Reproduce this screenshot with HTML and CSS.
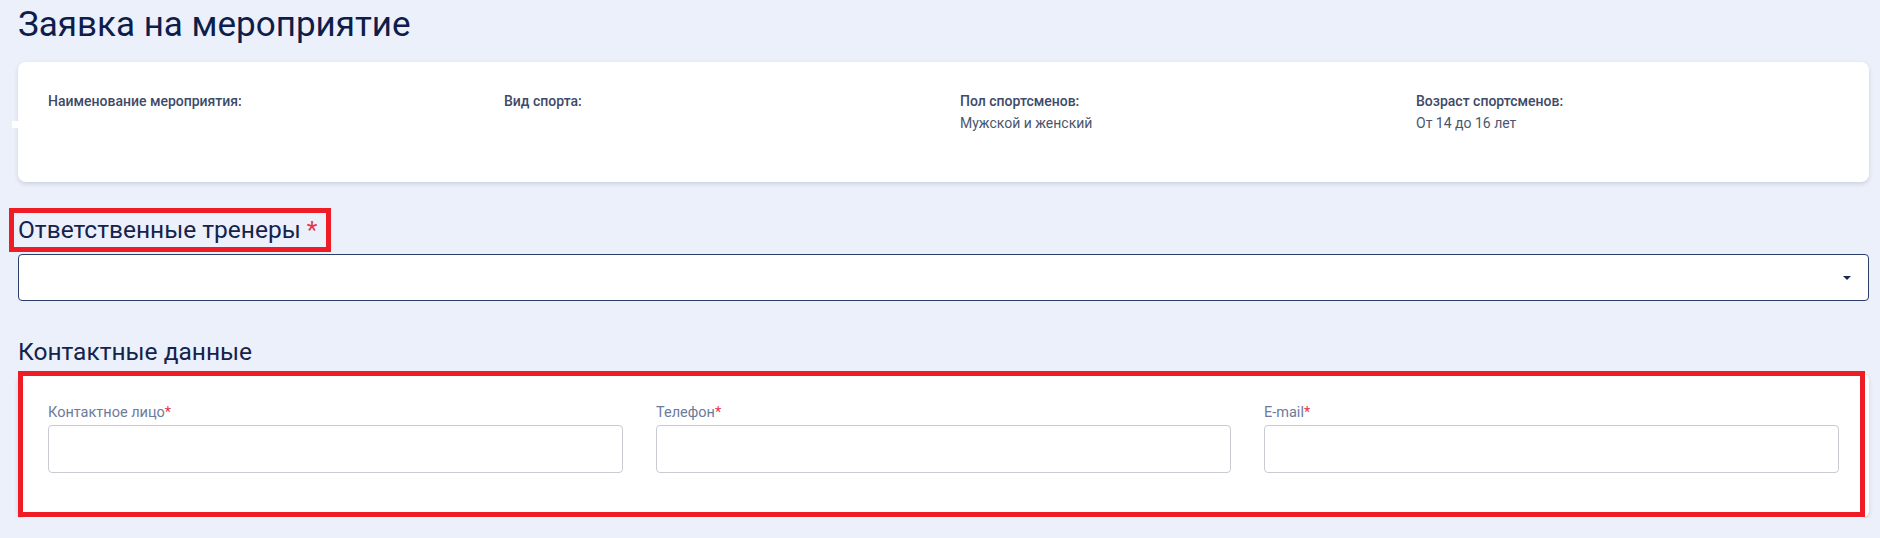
FILE: index.html
```html
<!DOCTYPE html>
<html lang="ru">
<head>
<meta charset="utf-8">
<title>Заявка на мероприятие</title>
<link rel="stylesheet" href="styles.css">
</head>
<body>
<main class="page">
  <h1 class="title">Заявка на мероприятие</h1>

  <section class="card info">
    <div class="info-item">
      <div class="info-label">Наименование мероприятия:</div>
      <div class="info-value"></div>
    </div>
    <div class="info-item">
      <div class="info-label">Вид спорта:</div>
      <div class="info-value"></div>
    </div>
    <div class="info-item">
      <div class="info-label">Пол спортсменов:</div>
      <div class="info-value">Мужской и женский</div>
    </div>
    <div class="info-item">
      <div class="info-label">Возраст спортсменов:</div>
      <div class="info-value">От 14 до 16 лет</div>
    </div>
  </section>

  <h2 class="section-title marked">Ответственные тренеры <span class="req">*</span></h2>
  <div class="select">
    <span class="select-value"></span>
    <svg class="select-arrow" width="8" height="4" viewBox="0 0 8 4"><path d="M0 0H8L4 4Z" fill="#1b2a52"/></svg>
  </div>

  <h2 class="section-title">Контактные данные</h2>
  <section class="card contacts marked-box">
    <div class="field">
      <div class="field-label">Контактное лицо<span class="req">*</span></div>
      <div class="input"></div>
    </div>
    <div class="field">
      <div class="field-label">Телефон<span class="req">*</span></div>
      <div class="input"></div>
    </div>
    <div class="field">
      <div class="field-label">E-mail<span class="req">*</span></div>
      <div class="input"></div>
    </div>
  </section>
</main>
</body>
</html>
```

FILE: styles.css
```css
* { box-sizing: border-box; }

html, body {
  margin: 0;
  padding: 0;
  background: #ecf0fa;
  font-family: Roboto, "Noto Sans", "Liberation Sans", sans-serif;
}

.page {
  padding: 5px 11px 0 18px;
}

.title {
  margin: 0 0 17px 0;
  font-size: 35px;
  line-height: 40px;
  font-weight: 400;
  color: #0e1d4a;
}

.card {
  background: #ffffff;
  border-radius: 8px;
  box-shadow: 0 2px 4px rgba(60, 70, 110, 0.18);
  position: relative;
}

.info {
  height: 120px;
  padding: 29px 30px 0 30px;
  display: grid;
  grid-template-columns: repeat(4, 1fr);
  column-gap: 33px;
  align-content: start;
}

.info::before {
  content: "";
  position: absolute;
  left: -6px;
  top: 59px;
  width: 6px;
  height: 7px;
  background: #ffffff;
}

.info-label {
  font-size: 14px;
  line-height: 20px;
  font-weight: 500;
  color: #3d4a68;
}

.info-value {
  margin-top: 2px;
  font-size: 14px;
  line-height: 20px;
  font-weight: 400;
  color: #4b566d;
  min-height: 20px;
}

.section-title {
  margin: 34px 0 0 0;
  font-size: 24.5px;
  line-height: 28px;
  font-weight: 400;
  color: #14234c;
  width: fit-content;
  position: relative;
}

.section-title + .card { margin-top: 7px; }

.select + .section-title { margin-top: 37px; }

.req { color: #e8344c; }

.marked::after {
  content: "";
  position: absolute;
  left: -9px;
  top: -8px;
  right: -14px;
  bottom: -8px;
  border: 5px solid #ee1c25;
}

.select {
  margin-top: 10px;
  height: 47px;
  background: #ffffff;
  border: 1px solid #2c3f6b;
  border-radius: 4px;
  display: flex;
  align-items: center;
  justify-content: space-between;
  padding: 0 17px 0 20px;
}

.select-arrow {
  display: block;
  margin-top: 1px;
}

.contacts {
  padding: 31px 30px 45px 30px;
  display: grid;
  grid-template-columns: repeat(3, 1fr);
  column-gap: 33px;
}

.marked-box::after {
  content: "";
  position: absolute;
  left: 0;
  top: -2px;
  right: 4px;
  bottom: 1px;
  border: 5px solid #ee1c25;
}

.field-label {
  font-size: 14.5px;
  line-height: 17px;
  color: #6c7b9c;
  margin-bottom: 4px;
}

.input {
  height: 48px;
  border: 1px solid #c9cbd3;
  border-radius: 4px;
  background: #ffffff;
}
```
